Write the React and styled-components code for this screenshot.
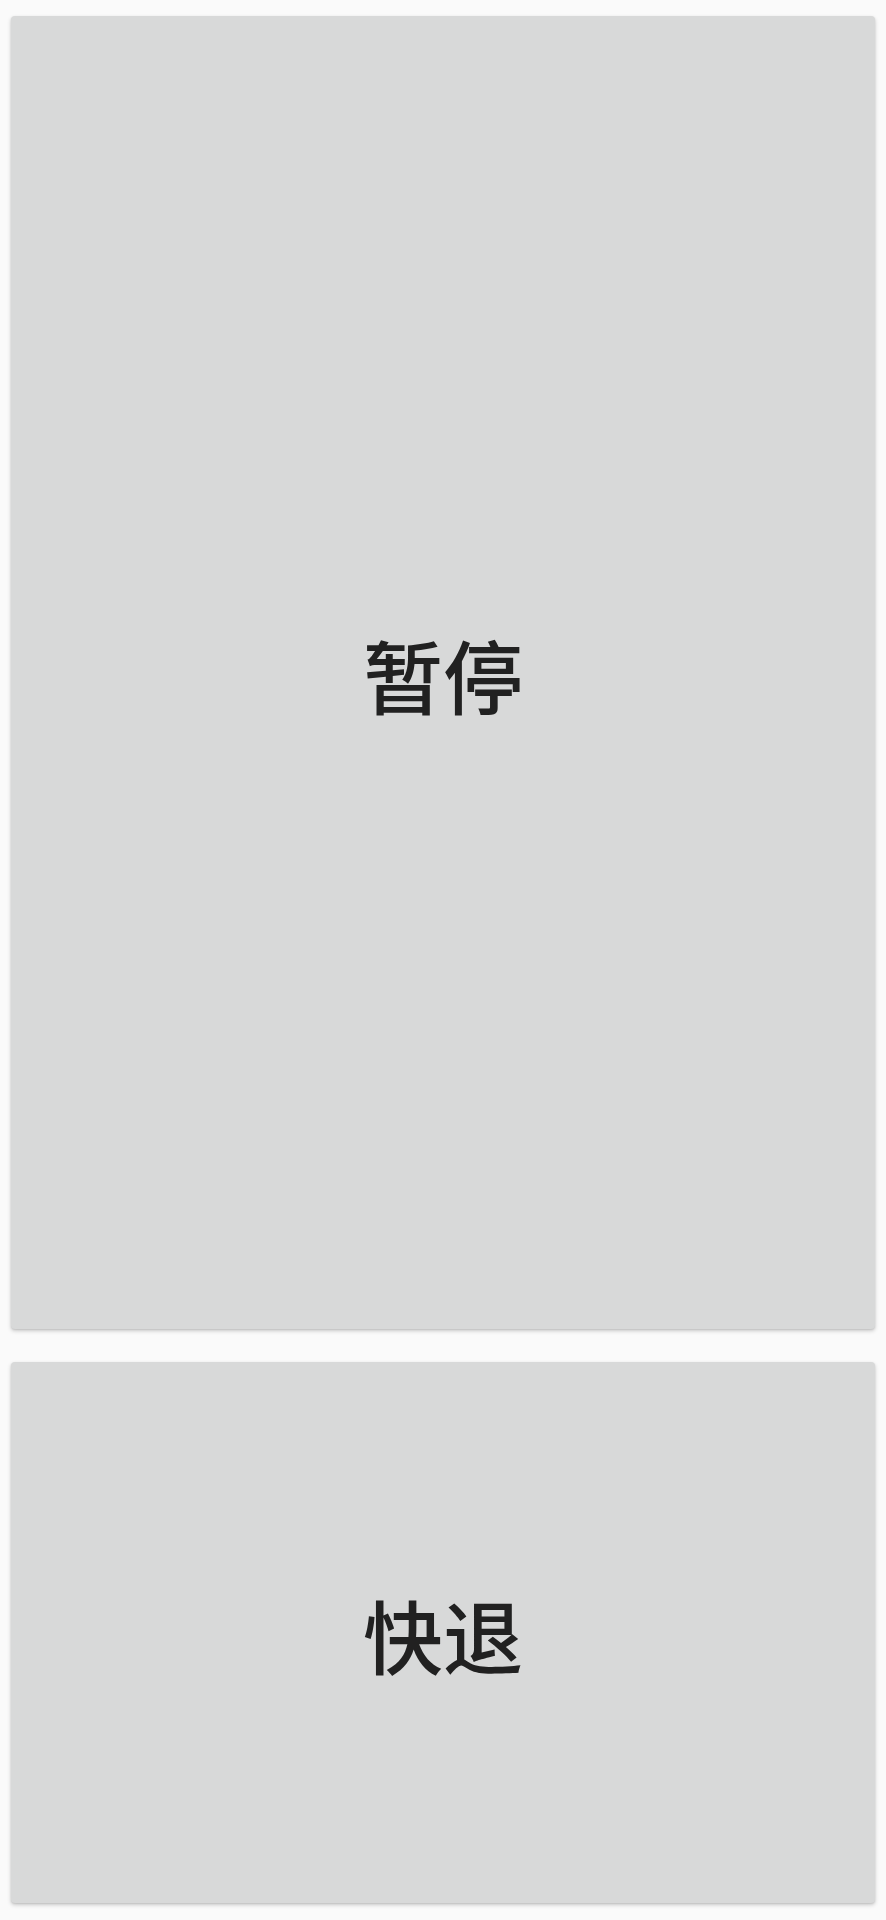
import React from "react";
import styled, { createGlobalStyle } from "styled-components";

const Global = createGlobalStyle`
  html, body { margin: 0; padding: 0; background: #fafafa; }
  body { font-family: "Noto Sans CJK SC", "Noto Sans", sans-serif; }
`;

const Page = styled.div`
  display: flex;
  flex-direction: column;
  gap: 33px;
  padding: 16px 11px 17px;
  height: 1920px;
  box-sizing: border-box;
`;

const Card = styled.button`
  all: unset;
  box-sizing: border-box;
  display: flex;
  align-items: center;
  justify-content: center;
  height: ${(p) => p.$h}px;
  flex: none;
  width: 100%;
  background: #d8d9d9;
  border-radius: 4px;
  box-shadow: 0 2px 4px rgba(0, 0, 0, 0.18), 0 1px 2px rgba(0, 0, 0, 0.1);
  color: #212121;
  font-family: "Noto Sans CJK SC", sans-serif;
  font-size: 80px;
  font-weight: ${(p) => p.$w};
  line-height: 1;
`;

export default function App() {
  return (
    <>
      <Global />
      <Page>
        <Card $h={1313} $w={500}>暂停</Card>
        <Card $h={541} $w={500}>快退</Card>
      </Page>
    </>
  );
}
